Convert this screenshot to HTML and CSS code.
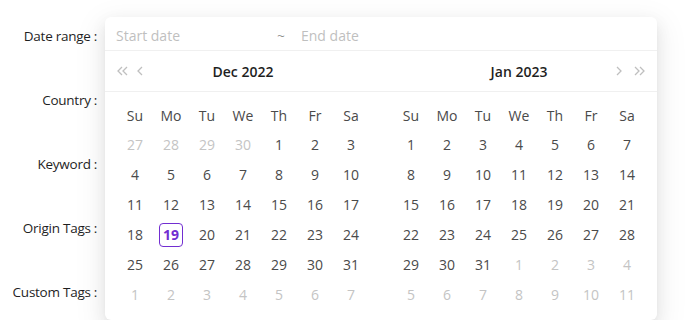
FILE: index.html
```html
<!DOCTYPE html>
<html lang="en">
<head>
  <meta charset="UTF-8">
  <title>Search Form</title>
  <link rel="stylesheet" href="styles.css">
</head>
<body>
  <div class="form">
    <div class="labels">
      <label class="label">Date range</label>
      <label class="label">Country</label>
      <label class="label">Keyword</label>
      <label class="label">Origin Tags</label>
      <label class="label">Custom Tags</label>
    </div>

    <div class="picker">
      <div class="picker-input">
        <span class="ph start">Start date</span>
        <span class="sep">~</span>
        <span class="ph">End date</span>
      </div>
      <div class="panels">
        <div class="panel" id="left">
          <div class="panel-head">
            <span class="nav">
              <svg width="12" height="10" viewBox="0 0 12 10"><path d="M5 1 1 5l4 4M10 1 6 5l4 4"/></svg>
              <svg width="6" height="10" viewBox="0 0 6 10"><path d="M5 1 1 5l4 4"/></svg>
            </span>
            <span class="title">Dec 2022</span>
            <span class="nav"></span>
          </div>
          <table class="cal"><thead></thead><tbody></tbody></table>
        </div>
        <div class="panel" id="right">
          <div class="panel-head">
            <span class="nav"></span>
            <span class="title">Jan 2023</span>
            <span class="nav right">
              <svg width="6" height="10" viewBox="0 0 6 10"><path d="M1 1l4 4-4 4"/></svg>
              <svg width="12" height="10" viewBox="0 0 12 10"><path d="M2 1l4 4-4 4M7 1l4 4-4 4"/></svg>
            </span>
          </div>
          <table class="cal"><thead></thead><tbody></tbody></table>
        </div>
      </div>
    </div>
  </div>

  <script>
    const DAYS = ["Su", "Mo", "Tu", "We", "Th", "Fr", "Sa"];

    // first visible day, days in previous month, days in month
    function fill(id, start, prevLen, len, today) {
      const table = document.querySelector(`#${id} .cal`);
      table.querySelector("thead").innerHTML =
        "<tr>" + DAYS.map(d => `<th>${d}</th>`).join("") + "</tr>";
      const tbody = table.querySelector("tbody");
      let day = start, phase = start === 1 ? 1 : 0;
      for (let r = 0; r < 6; r++) {
        const row = document.createElement("tr");
        for (let c = 0; c < 7; c++) {
          const cls = phase === 1 ? "in" : "out";
          const mark = phase === 1 && day === today ? " today" : "";
          row.innerHTML += `<td class="${cls}"><span class="cell${mark}">${day}</span></td>`;
          day++;
          if (phase === 0 && day > prevLen) { day = 1; phase = 1; }
          else if (phase === 1 && day > len) { day = 1; phase = 2; }
        }
        tbody.appendChild(row);
      }
    }

    fill("left", 27, 30, 31, 19);
    fill("right", 1, 31, 31, 0);
  </script>
</body>
</html>
```

FILE: styles.css
```css
body { margin: 0; font-family: "Open Sans", "Noto Sans", sans-serif; font-size: 14px; color: rgba(0,0,0,0.88); background: #fff; }

.form { display: flex; padding-top: 17px; }
.labels { width: 97px; display: flex; flex-direction: column; gap: 26px; }
.label { height: 38px; line-height: 38px; text-align: right; white-space: nowrap; font-size: 13.5px; letter-spacing: -0.25px; color: #1f1f1f; }
.label::after { content: ":"; margin-left: 3px; }

.picker { margin-left: 8px; width: 552px; background: #fff; border-radius: 6px;
  box-shadow: 0 6px 16px 0 rgba(0,0,0,0.08), 0 3px 6px -4px rgba(0,0,0,0.12), 0 9px 28px 8px rgba(0,0,0,0.05); }

.picker-input { height: 34px; padding: 4px 11px 0; box-sizing: border-box; line-height: 30px; border-bottom: 1px solid #f0f0f0; display: flex; }
.ph { color: #bfbfbf; }
.ph.start { width: 161px; }
.sep { color: rgba(0,0,0,0.45); padding: 0 8px 0 0; width: 16px; }

.panels { display: flex; }
.panel { width: 276px; }

.panel-head { height: 40px; border-bottom: 1px solid #f0f0f0; display: flex; align-items: center; padding: 0 12px; }
.panel-head .nav { width: 40px; display: flex; align-items: center; gap: 8px; }
.panel-head .nav.right { justify-content: flex-end; gap: 11px; }
.panel-head svg { fill: none; stroke: #bfbfbf; stroke-width: 1.3; }
.title { flex: 1; text-align: center; font-weight: 600; color: #1f1f1f; }

.cal { border-collapse: collapse; margin: 8px 12px 10px; width: 252px; }
.cal th, .cal td { width: 36px; height: 30px; padding: 0; text-align: center; font-weight: 400; color: #4a4a4a; }
.cal td.out { color: #c4c4c4; }
.cell { display: inline-block; min-width: 24px; height: 24px; line-height: 24px; box-sizing: border-box; border-radius: 4px; }
.cell.today { border: 1px solid #722ed1; color: #722ed1; font-weight: 700; line-height: 22px; }
```
